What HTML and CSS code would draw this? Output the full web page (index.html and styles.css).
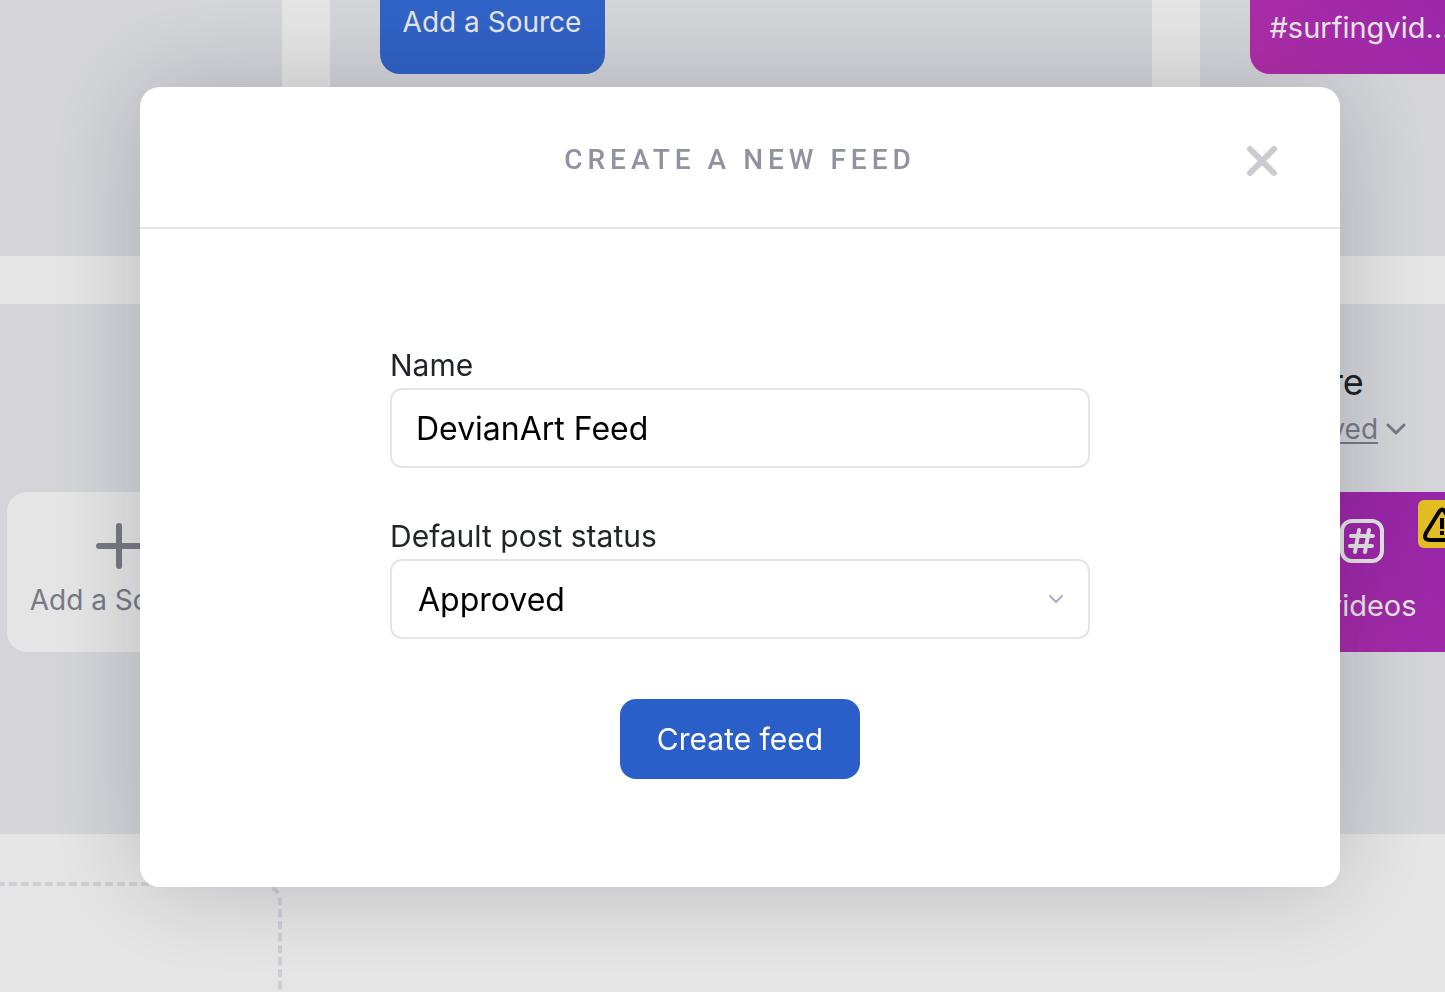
FILE: index.html
```html
<!DOCTYPE html>
<html lang="en">
<head>
  <meta charset="UTF-8">
  <meta name="viewport" content="width=device-width, initial-scale=1.0">
  <title>Create a new feed</title>
  <link rel="stylesheet" href="styles.css">
</head>
<body>
  <main class="board">
    <section class="feed"></section>

    <section class="feed">
      <div class="feed-head"></div>
      <div class="sources">
        <button class="source source-primary" type="button">
          <svg class="plus" viewBox="0 0 46 46"><path d="M23 3v40M3 23h40"/></svg>
          <span>Add a Source</span>
        </button>
      </div>
    </section>

    <section class="feed">
      <div class="feed-head"></div>
      <div class="sources">
        <button class="source source-hashtag" type="button">
          <svg class="hash" viewBox="0 0 44 44"><rect x="2" y="2" width="40" height="40" rx="10"/><path d="M19 11l-4 22M29 11l-4 22M11 17h22M10 27h22"/></svg>
          <span>#surfingvideos</span>
        </button>
      </div>
    </section>

    <section class="feed">
      <div class="feed-head"></div>
      <div class="sources">
        <div class="source-slot"></div>
        <div class="source-slot"></div>
        <button class="source source-add" type="button">
          <svg class="plus" viewBox="0 0 46 46"><path d="M23 3v40M3 23h40"/></svg>
          <span>Add a Source</span>
        </button>
      </div>
    </section>

    <section class="feed"></section>

    <section class="feed">
      <div class="feed-head">
        <h2>Nature</h2>
        <a class="status" href="#">
          <span>Approved</span>
          <svg viewBox="0 0 20 12"><path d="M2 2l8 8 8-8"/></svg>
        </a>
      </div>
      <div class="sources">
        <button class="source source-hashtag" type="button">
          <svg class="hash" viewBox="0 0 44 44"><rect x="2" y="2" width="40" height="40" rx="10"/><path d="M19 11l-4 22M29 11l-4 22M11 17h22M10 27h22"/></svg>
          <span>#videos</span>
          <i class="warning">
            <svg viewBox="0 0 48 48"><path d="M21 12q3-5 6 0l13 21q3 7-4 7H12q-7 0-4-7z"/><path class="mark" d="M24 18v11M24 31v4"/></svg>
          </i>
        </button>
      </div>
    </section>

    <section class="feed-empty"></section>
  </main>

  <div class="overlay">
    <div class="modal" role="dialog" aria-labelledby="modal-title">
      <header class="modal-header">
        <h1 id="modal-title">Create a new feed</h1>
        <button class="close" type="button" aria-label="Close">
          <svg viewBox="0 0 32 32"><path d="M4 4l24 24M28 4L4 28"/></svg>
        </button>
      </header>
      <form class="modal-form">
        <div class="field">
          <label for="feed-name">Name</label>
          <input id="feed-name" type="text" value="DevianArt Feed">
        </div>
        <div class="field">
          <label for="feed-status">Default post status</label>
          <div class="select">
            <select id="feed-status">
              <option>Approved</option>
              <option>Pending</option>
            </select>
            <svg viewBox="0 0 16 10"><path d="M2 2l6 6 6-6"/></svg>
          </div>
        </div>
        <button class="submit" type="button">Create feed</button>
      </form>
    </div>
  </div>
</body>
</html>
```
FILE: styles.css
```css
* {
  box-sizing: border-box;
}

body {
  margin: 0;
  height: 100vh;
  overflow: hidden;
  background: #fff;
  color: #212529;
  font-family: Inter, "Liberation Sans", sans-serif;
  font-size: 28px;
}

button, input, select {
  font-family: inherit;
}

svg {
  fill: none;
  stroke: currentColor;
  stroke-linecap: round;
  stroke-linejoin: round;
}

/* Feed board behind the dialog */
.board {
  display: grid;
  grid-template-columns: repeat(3, 822px);
  grid-auto-rows: 530px;
  gap: 48px;
  justify-content: center;
  margin-top: -274px;
  padding-left: 36px;
}

.feed {
  padding: 50px;
  background: #ecedf2;
}

.feed-empty {
  border: 4px dashed #e6e7ed;
  border-radius: 20px;
}

.feed-head {
  height: 138px;
}

.feed-head h2 {
  margin: 0;
  font-size: 36px;
  font-weight: 400;
  line-height: 56px;
}

.status {
  display: flex;
  align-items: center;
  gap: 8px;
  color: #858794;
  line-height: 38px;
  text-underline-offset: 3px;
}

.status svg {
  width: 20px;
  height: 12px;
  stroke-width: 3;
}

.sources {
  display: flex;
  gap: 24px;
}

.source,
.source-slot {
  width: 225px;
  height: 160px;
}

.source {
  position: relative;
  display: flex;
  flex-direction: column;
  align-items: center;
  padding: 27px 20px 0;
  border: 0;
  border-radius: 20px;
  color: #fff;
  font-size: 29px;
}

.source span {
  max-width: 100%;
  margin-top: 24px;
  overflow: hidden;
  line-height: 38px;
  text-overflow: ellipsis;
  white-space: nowrap;
}

.source-primary,
.source-add {
  padding-top: 31px;
  font-size: 28px;
}

.source-primary span,
.source-add span {
  margin-top: 12px;
}

.source-primary {
  background: #366ddd;
}

.source-add {
  background: #fff;
  color: #858794;
}

.source-hashtag {
  background: linear-gradient(45deg, #c534bb, #b02dbb 50%, #a628b9);
}

.plus {
  width: 46px;
  height: 46px;
  stroke-width: 6;
}

.hash {
  width: 44px;
  height: 44px;
  stroke-width: 4;
}

.warning {
  position: absolute;
  top: 8px;
  right: 9px;
  width: 48px;
  height: 48px;
  border-radius: 6px;
  background: #fdd426;
  color: #000;
}

.warning svg {
  display: block;
  stroke-width: 4;
}

.warning .mark {
  stroke-linecap: butt;
}

/* Dialog */
.overlay {
  position: fixed;
  inset: 0;
  display: flex;
  align-items: center;
  justify-content: center;
  padding: 0 0 18px 35px;
  background: rgba(0, 0, 0, 0.1);
}

.modal {
  flex: 0 0 auto;
  width: 1200px;
  border-radius: 20px;
  background: #fff;
  box-shadow: 0 0 100px rgba(10, 10, 25, 0.2);
}

.modal-header {
  display: grid;
  grid-template-columns: 1fr auto 1fr;
  align-items: center;
  padding: 55px 60px 49px;
  border-bottom: 2px solid #e5e5e5;
}

.modal-header h1 {
  grid-column: 2;
  margin: 0;
  color: #9192a1;
  font-family: Roboto, sans-serif;
  font-size: 28px;
  font-weight: 500;
  letter-spacing: 5px;
  line-height: 36px;
  text-transform: uppercase;
}

.close {
  justify-self: end;
  width: 36px;
  height: 36px;
  padding: 3px 2px 1px;
  border: 0;
  background: none;
  color: #cacad0;
}

.close svg {
  display: block;
  stroke-width: 6;
}

.modal-form {
  display: flex;
  flex-direction: column;
  align-items: center;
  padding: 115px 60px 108px;
}

.field {
  width: 700px;
  margin-bottom: 47px;
}

.field label {
  display: block;
  padding-bottom: 2px;
  font-size: 30px;
  line-height: 42px;
}

.field input,
.field select {
  display: block;
  width: 100%;
  height: 80px;
  padding: 0 24px;
  border: 2px solid #e5e5e5;
  border-radius: 12px;
  background: #fff;
  color: #000;
  font-size: 32px;
  appearance: none;
}

.field select {
  padding-left: 26px;
}

.select {
  position: relative;
}

.select svg {
  position: absolute;
  top: 35px;
  right: 26px;
  width: 16px;
  height: 10px;
  color: #b5a3c4;
  stroke-width: 2;
  pointer-events: none;
}

.submit {
  width: 240px;
  height: 80px;
  margin-top: 13px;
  border: 0;
  border-radius: 16px;
  background: #2a5fc9;
  color: #fff;
  font-size: 30px;
}
```
